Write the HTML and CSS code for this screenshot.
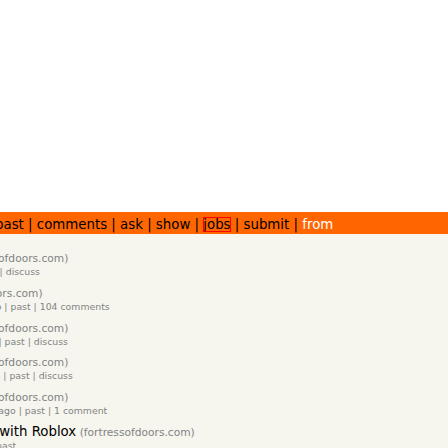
FILE: index.html
```html
<!DOCTYPE html>
<html lang="en">
<head>
<meta charset="utf-8">
<title>fortressofdoors.com | Hacker News</title>
<link rel="stylesheet" href="styles.css">
</head>
<body>
<div class="top-space"></div>
<div class="page">
  <div class="hn-header">
    <span class="logo">Y</span>
    <span class="pagetop"><b class="hnname">Hacker News</b> <a href="#">new</a> | <a href="#">past</a> | <a href="#">comments</a> | <a href="#">ask</a> | <a href="#">show</a> | <a href="#" class="hl">jobs</a> | <a href="#">submit</a> | <a href="#" class="topsel">from</a></span>
  </div>
  <div class="itemlist">
    <div class="item">
      <div class="titlerow"><span class="rank">1.</span><span class="vote"></span><span class="titleline"><a href="#">Land is a Big Deal</a><span class="sitebit"> (<span class="sitestr">fortressofdoors.com</span>)</span></span></div>
      <div class="subtext">3 points by larsiusprime 2 days ago | <a href="#">discuss</a></div>
    </div>
    <div class="item">
      <div class="titlerow"><span class="rank">2.</span><span class="vote"></span><span class="titleline"><a href="#">Georgism FAQ</a><span class="sitebit"> (<span class="sitestr">fortressofdoors.com</span>)</span></span></div>
      <div class="subtext">92 points by larsiusprime 1 year ago | <a href="#">past</a> | <a href="#">104 comments</a></div>
    </div>
    <div class="item">
      <div class="titlerow"><span class="rank">3.</span><span class="vote"></span><span class="titleline"><a href="#">Land is a Big Deal</a><span class="sitebit"> (<span class="sitestr">fortressofdoors.com</span>)</span></span></div>
      <div class="subtext">2 points by larsiusprime 1 year ago | <a href="#">past</a> | <a href="#">discuss</a></div>
    </div>
    <div class="item">
      <div class="titlerow"><span class="rank">4.</span><span class="vote"></span><span class="titleline"><a href="#">Land is a Big Deal</a><span class="sitebit"> (<span class="sitestr">fortressofdoors.com</span>)</span></span></div>
      <div class="subtext">4 points by larsiusprime 2 years ago | <a href="#">past</a> | <a href="#">discuss</a></div>
    </div>
    <div class="item">
      <div class="titlerow"><span class="rank">5.</span><span class="vote"></span><span class="titleline"><a href="#">Land is a Big Deal</a><span class="sitebit"> (<span class="sitestr">fortressofdoors.com</span>)</span></span></div>
      <div class="subtext">2 points by larsiusprime 10 months ago | <a href="#">past</a> | <a href="#">1 comment</a></div>
    </div>
    <div class="item">
      <div class="titlerow"><span class="rank">6.</span><span class="vote"></span><span class="titleline"><a href="#">What is the real problem with Roblox</a><span class="sitebit"> (<span class="sitestr">fortressofdoors.com</span>)</span></span></div>
      <div class="subtext">1 point by larsiusprime 1 day ago | <a href="#">past</a></div>
    </div>
  </div>
</div>
</body>
</html>
```
FILE: styles.css
```css
html, body {
  margin: 0;
  padding: 0;
  background: #ffffff;
}

body {
  overflow: hidden;
  font-family: "DejaVu Sans", Verdana, sans-serif;
}

.top-space {
  height: 212px;
}

.page {
  margin-left: -200px;
  width: 660px;
  background: #f6f6ef;
  min-height: 260px;
}

.hn-header {
  background: #ff6600;
  height: 22px;
  box-sizing: border-box;
  padding: 5px 0 0 33px;
  display: flex;
  align-items: flex-start;
  gap: 4px;
  font-size: 13.333px;
  line-height: 16px;
  white-space: nowrap;
  overflow: hidden;
}

.logo {
  width: 14px;
  height: 14px;
  border: 1px solid #ffffff;
  color: #ffffff;
  font-weight: bold;
  font-size: 11px;
  line-height: 14px;
  text-align: center;
  flex: none;
}

.pagetop {
  color: #000000;
}

.pagetop a {
  color: #000000;
  text-decoration: none;
}

.pagetop .topsel {
  color: #ffffff;
}

.pagetop .hl {
  outline: 1px solid #ff0000;
  outline-offset: -1px;
}

.itemlist {
  padding-top: 16px;
}

.item {
  margin-bottom: 7.8px;
}

.titlerow {
  display: grid;
  grid-template-columns: 16px 14px auto;
  height: 16px;
  line-height: 16px;
  font-size: 13.333px;
  white-space: nowrap;
}

.rank {
  color: #828282;
  text-align: right;
}

.titleline a {
  color: #000000;
  text-decoration: none;
}

.sitebit {
  font-size: 10.667px;
  color: #828282;
}

.subtext {
  padding-left: 30px;
  height: 11px;
  line-height: 11px;
  font-size: 9.333px;
  color: #828282;
  white-space: nowrap;
}

.subtext a {
  color: #828282;
  text-decoration: none;
}
```
